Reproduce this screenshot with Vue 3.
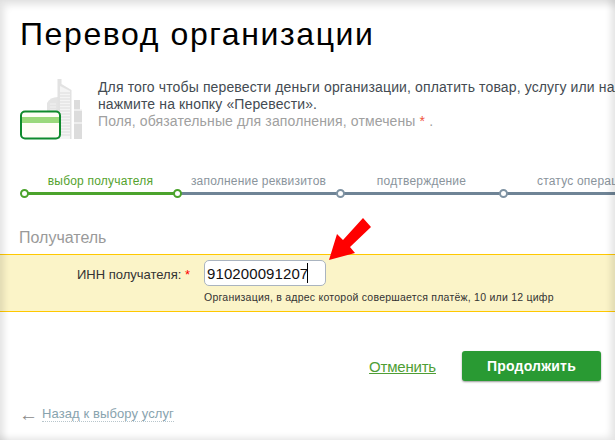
<script setup>
const steps = [
  { label: 'выбор получателя', done: true },
  { label: 'заполнение реквизитов', done: false },
  { label: 'подтверждение', done: false },
  { label: 'статус операции', done: false }
]
</script>

<template>
  <div class="page">
    <h1 class="title">Перевод организации</h1>

    <div class="intro">
      <svg class="intro-icon" width="66" height="62" viewBox="0 0 66 62">
        <path d="M28 61V25q3-6 11-6v42z" fill="#e4e4e4" />
        <path d="M38.500 1h4v5l10 6v49h-14z" fill="#e2e2e2" />
        <path d="M41 8l10 5v48H41z" fill="#f4f4f4" />
        <path d="M41 15h10M41 18h10M41 21h10M41 24h10M41 27h10M41 30h10M41 33h10M41 36h10M41 39h10M41 42h10M41 45h10M41 48h10M41 51h10M41 54h10M41 57h10" stroke="#dcdcdc" stroke-width="1" />
        <path d="M31 26h6M31 29h6M31 32h6" stroke="#f2f2f2" stroke-width="1" />
        <path d="M55 22h6v10h2v29h-8z" fill="#dcdcdc" />
        <path d="M55 32h8M55 45h8" stroke="#f4f4f4" stroke-width="1.500" />
        <rect x="2" y="33.500" width="39" height="27" rx="4" fill="#fffef6" stroke="#0f8a2c" stroke-width="2" />
        <rect x="3" y="39" width="37" height="6" fill="#9bd97b" />
      </svg>
      <div class="intro-text">
        <p class="lead">Для того чтобы перевести деньги организации, оплатить товар, услугу или налог,<br />нажмите на кнопку «Перевести».</p>
        <p class="hint">Поля, обязательные для заполнения, отмечены <span class="star">*</span> .</p>
      </div>
    </div>

    <ol class="steps">
      <li v-for="s in steps" :key="s.label" class="step" :class="{ done: s.done }">
        <span class="step-label">{{ s.label }}</span>
        <span class="step-line"><i class="node"></i></span>
      </li>
    </ol>

    <h2 class="section">Получатель</h2>

    <div class="band">
      <label class="field-label">ИНН получателя: <span class="req">*</span></label>
      <div class="field">
        <div class="input">910200091207<i class="caret"></i></div>
        <div class="field-hint">Организация, в адрес которой совершается платёж, 10 или 12 цифр</div>
      </div>
      <svg class="arrow" width="46" height="44" viewBox="0 0 46 44">
        <path d="M2 42L10 16l6 6L36 0l8 9-21 20 5 6z" fill="#ff0000" />
      </svg>
    </div>

    <div class="actions">
      <a class="cancel">Отменить</a>
      <button class="primary">Продолжить</button>
    </div>

    <div class="back">
      <span class="back-arrow">←</span>
      <a class="back-link">Назад к выбору услуг</a>
    </div>

    <div class="edge"></div>
  </div>
</template>

<style>
html, body { margin: 0; background: #fff; }
</style>

<style scoped>
.page {
  position: relative;
  width: 615px;
  height: 440px;
  overflow: hidden;
  background: #fff;
  font-family: "Liberation Sans", Arial, sans-serif;
  white-space: nowrap;
}
.title {
  margin: 0;
  padding: 14px 0 0 20px;
  font-size: 32px;
  line-height: 40px;
  font-weight: 400;
  letter-spacing: 1.6px;
  color: #000;
}
.intro {
  display: flex;
  margin-top: 24px;
  padding-left: 19px;
  height: 62px;
}
.intro-icon { flex: none; }
.intro-text { margin: 1px 0 0 13px; font-size: 14px; line-height: 17px; letter-spacing: 0.13px; }
.lead, .hint { margin: 0; }
.lead { color: #444b52; }
.hint { color: #a0a0a0; }
.star { color: #f0543c; }
.steps {
  list-style: none;
  display: flex;
  margin: 34px 0 0;
  padding: 0 0 0 24px;
}
.step { flex: none; width: 163px; }
.step:first-child { width: 153px; }
.step-label {
  display: block;
  text-align: center;
  font-size: 12px;
  line-height: 14px;
  letter-spacing: 0.2px;
  color: #8a949c;
}
.step.done .step-label { color: #54a22e; }
.step-line {
  position: relative;
  display: block;
  height: 3px;
  margin-top: 4px;
  background: #6f8496;
}
.step.done .step-line { background: #4ba32c; }
.node {
  position: absolute;
  left: -4px;
  top: -3px;
  width: 5px;
  height: 5px;
  border: 2px solid #7f93a3;
  border-radius: 50%;
  background: #fff;
}
.step.done .node { border-color: #4ba32c; }
.step:nth-child(2) .node { border-color: #4ba32c; }
.section {
  margin: 33px 0 0 19px;
  font-size: 16px;
  line-height: 20px;
  font-weight: 400;
  color: #9a9a9a;
}
.band {
  position: relative;
  display: flex;
  margin-top: 6px;
  height: 56px;
  border-top: 1px solid #ffc800;
  border-bottom: 1px solid #ffc800;
  background: #fbf4c8;
}
.field-label {
  flex: none;
  width: 190px;
  padding-top: 12px;
  text-align: right;
  font-size: 13px;
  line-height: 15px;
  color: #333;
}
.req { color: #f00; }
.field { margin-left: 14px; padding-top: 5px; }
.input {
  display: flex;
  align-items: center;
  box-sizing: border-box;
  width: 122px;
  height: 26px;
  padding-left: 2px;
  border: 1px solid #aab4c0;
  border-radius: 5px;
  background: #fff;
  font-size: 15px;
  letter-spacing: 0.1px;
  color: #111;
}
.caret { width: 1px; height: 20px; margin-left: -1px; background: #000; }
.field-hint {
  margin-top: 4px;
  font-size: 10.5px;
  line-height: 14px;
  letter-spacing: 0.24px;
  color: #333;
}
.arrow { position: absolute; left: 327px; top: -37px; }
.actions {
  display: flex;
  align-items: center;
  justify-content: flex-end;
  margin-top: 39px;
  padding-right: 14px;
}
.cancel {
  font-size: 15px;
  letter-spacing: -0.2px;
  color: #4f9e35;
  text-decoration: underline;
}
.primary {
  width: 139px;
  height: 30px;
  margin-left: 26px;
  border: 0;
  border-radius: 3px;
  background: #299a33;
  box-shadow: 0 1px 2px rgba(0, 0, 0, .4);
  font-family: inherit;
  font-size: 14px;
  font-weight: 700;
  letter-spacing: 0.2px;
  color: #fff;
}
.back {
  display: flex;
  align-items: center;
  margin-top: 25px;
  padding-left: 19px;
  font-size: 13px;
  line-height: 15px;
}
.back-arrow { width: 23px; height: 15px; font-size: 19px; line-height: 15px; color: #8a8a8a; }
.back-link {
  letter-spacing: 0.1px;
  color: #88a3ae;
  border-bottom: 1px dotted #b8c6cc;
}
.edge {
  position: absolute;
  inset: 0;
  pointer-events: none;
  box-shadow: inset 5px 6px 7px -1px rgba(0, 0, 0, .11), inset -5px -3px 7px -1px rgba(0, 0, 0, .11);
}
</style>
